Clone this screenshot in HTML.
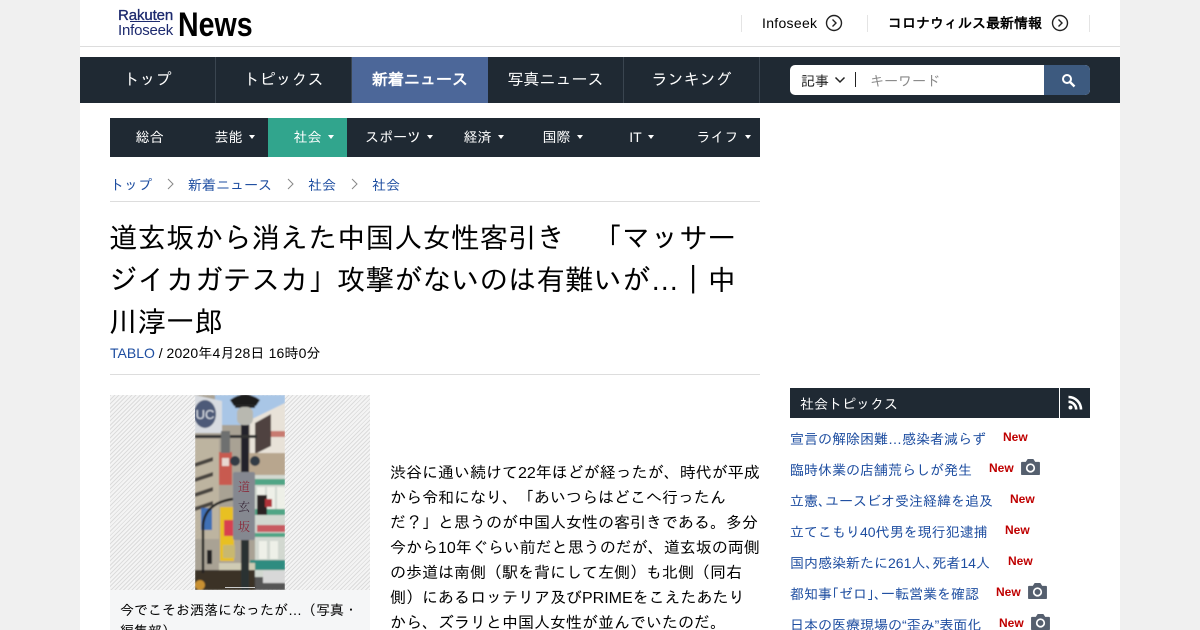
<!DOCTYPE html>
<html lang="ja"><head><meta charset="utf-8"><title>News</title>
<style>
*{box-sizing:border-box}
html,body{margin:0;padding:0;width:1200px;height:630px;overflow:hidden;background:#f0f0f0}
body{font-family:"Liberation Sans","IPAGothic",sans-serif;color:#000;text-spacing-trim:space-all}
#r{position:relative;width:1200px;height:630px;overflow:hidden}
.a{position:absolute;white-space:nowrap}
#w{position:absolute;left:80px;top:0;width:1040px;height:630px;background:#fff}
.nav{position:absolute;top:57px;height:46px;line-height:48px;color:#fff;font-size:16px;text-align:center;border-right:1px solid #3a4550}
.sub{position:absolute;top:118px;height:39px;line-height:39px;color:#fff;font-size:14px;text-align:center}
.sub i{display:inline-block;width:0;height:0;border:3px solid transparent;border-top:4px solid #fff;border-bottom:0;margin-left:6px;vertical-align:3px}
.l{color:#1d4da0}
.s{position:absolute;left:790px;font-size:14px;line-height:20px;color:#1d4da0;white-space:nowrap}
.n{position:absolute;font-size:12px;line-height:16px;font-weight:bold;color:#bf0000}
.b{position:absolute;left:390px;font-size:16px;line-height:25px;white-space:nowrap}
</style></head><body><div id="r">
<div id="w"></div>
<div class="a" style="left:118px;top:8px;font-size:15px;line-height:15px;color:#1d2a6e;letter-spacing:-.1px;-webkit-text-stroke:.3px #1d2a6e">Rakuten</div>
<div style="position:absolute;left:130px;top:21px;width:30px;height:1px;background:#1d2a6e"></div>
<div class="a" style="left:118px;top:23px;font-size:15px;line-height:15px;color:#1d2a6e;letter-spacing:-.2px">Infoseek</div>
<div class="a" style="left:178px;top:7px;font-size:34px;line-height:36px;font-weight:bold;transform:scaleX(.84);transform-origin:0 0">News</div>
<div style="position:absolute;left:80px;top:46px;width:1040px;height:1px;background:#ddd"></div>
<div style="position:absolute;left:741px;top:15px;width:1px;height:17px;background:#e4e4e4"></div>
<div class="a" style="left:762px;top:14px;font-size:14px;line-height:18px;letter-spacing:.3px">Infoseek</div>
<svg style="position:absolute;left:825px;top:14px" width="18" height="18" viewBox="0 0 18 18" fill="none" stroke="#222" stroke-width="1.4"><circle cx="9" cy="9" r="7.5"/><path d="M7.5 5.5L11 9 7.5 12.5"/></svg>
<div style="position:absolute;left:867px;top:15px;width:1px;height:17px;background:#e4e4e4"></div>
<div class="a" style="left:888px;top:14px;font-size:14px;line-height:18px;font-weight:bold">コロナウィルス最新情報</div>
<svg style="position:absolute;left:1051px;top:14px" width="18" height="18" viewBox="0 0 18 18" fill="none" stroke="#222" stroke-width="1.4"><circle cx="9" cy="9" r="7.5"/><path d="M7.5 5.5L11 9 7.5 12.5"/></svg>
<div style="position:absolute;left:1089px;top:15px;width:1px;height:17px;background:#e4e4e4"></div>

<div style="position:absolute;left:80px;top:57px;width:1040px;height:46px;background:#1f2933"></div>
<div class="nav" style="left:80px;width:136px">トップ</div>
<div class="nav" style="left:216px;width:136px">トピックス</div>
<div class="nav" style="left:352px;width:136px;background:#4c6799;font-weight:bold;border:0">新着ニュース</div>
<div class="nav" style="left:488px;width:136px">写真ニュース</div>
<div class="nav" style="left:624px;width:136px">ランキング</div>
<div style="position:absolute;left:790px;top:65px;width:300px;height:30px;background:#fff;border-radius:5px"></div>
<div style="position:absolute;left:1044px;top:65px;width:46px;height:30px;background:#3d5a7f;border-radius:0 5px 5px 0"></div>
<div class="a" style="left:801px;top:72px;font-size:14px;line-height:18px;color:#222">記事</div>
<svg style="position:absolute;left:834px;top:76px" width="12" height="8" viewBox="0 0 12 8" fill="none" stroke="#222" stroke-width="1.5"><path d="M1.5 1.5L6 6l4.5-4.5"/></svg>
<div style="position:absolute;left:855px;top:72px;width:1px;height:15px;background:#222"></div>
<div class="a" style="left:870px;top:72px;font-size:14px;line-height:18px;color:#8a8a8a">キーワード</div>
<svg style="position:absolute;left:1061px;top:73px" width="15" height="15" viewBox="0 0 15 15" fill="none" stroke="#fff"><circle cx="6" cy="6" r="4" stroke-width="2"/><path d="M9 9l4.5 4.5" stroke-width="2.4"/></svg>

<div style="position:absolute;left:110px;top:118px;width:650px;height:39px;background:#1f2933"></div>
<div class="sub" style="left:110px;width:79px">総合</div>
<div class="sub" style="left:189px;width:79px;padding-left:12px">芸能<i></i></div>
<div class="sub" style="left:268px;width:79px;background:#31a58d;padding-left:12px">社会<i></i></div>
<div class="sub" style="left:347px;width:104px">スポーツ<i></i></div>
<div class="sub" style="left:445px;width:79px;padding-right:2px">経済<i></i></div>
<div class="sub" style="left:524px;width:79px;padding-right:2px">国際<i></i></div>
<div class="sub" style="left:603px;width:79px;padding-right:2px">IT<i></i></div>
<div class="sub" style="left:682px;width:79px;padding-left:4px">ライフ<i></i></div>

<div class="a l" style="left:110px;top:176px;font-size:14px;line-height:18px">トップ</div>
<div class="a l" style="left:188px;top:176px;font-size:14px;line-height:18px">新着ニュース</div>
<div class="a l" style="left:308px;top:176px;font-size:14px;line-height:18px">社会</div>
<div class="a l" style="left:372px;top:176px;font-size:14px;line-height:18px">社会</div>
<svg style="position:absolute;left:166px;top:178px" width="250" height="12" fill="none" stroke="#888" stroke-width="1"><path d="M2 1l5 5-5 5M122 1l5 5-5 5M186 1l5 5-5 5"/></svg>
<div style="position:absolute;left:110px;top:201px;width:650px;height:1px;background:#ddd"></div>

<div class="a" style="left:109px;top:218px;font-size:28.5px;line-height:42px;white-space:nowrap;width:650px">道玄坂から消えた中国人女性客引き　「マッサー<br>ジイカガテスカ」攻撃がないのは有難いが…｜中<br>川淳一郎</div>
<div class="a" style="left:110px;top:344px;font-size:14px;line-height:18px"><span class="l">TABLO</span> / <span style="letter-spacing:.15px">2020年4月28日 16時0分</span></div>
<div style="position:absolute;left:110px;top:374px;width:650px;height:1px;background:#ddd"></div>

<div style="position:absolute;left:110px;top:395px;width:260px;height:195px;background:repeating-linear-gradient(135deg,#dcdcdc 0,#dcdcdc 1px,#f4f4f4 1px,#f4f4f4 3px)"></div>
<svg style="position:absolute;left:195px;top:395px" width="90" height="195" viewBox="0 0 90 195">
<defs><filter id="bl" x="0" y="0" width="100%" height="100%"><feGaussianBlur stdDeviation=".7"/></filter></defs>
<g filter="url(#bl)">
<rect width="90" height="195" fill="#a9a294"/>
<rect x="20" width="70" height="30" fill="#a9c6e6"/>
<path d="M0 0l27 6v32H0z" fill="#d8dbe0"/>
<ellipse cx="10" cy="19" rx="11" ry="14" fill="#4d5a78"/>
<text x="10" y="24" font-size="13" text-anchor="middle" fill="#dfe3ea" font-family="'Liberation Sans',sans-serif">UC</text>
<path d="M55 25L90 8v50H55z" fill="#e8e2d8"/>
<path d="M60 28L76 19v32l-16 8z" fill="#4f4240"/>
<rect x="76" y="36" width="14" height="6" fill="#c87a70"/>
<rect x="50" y="58" width="40" height="22" fill="#b8a68e"/>
<rect x="0" y="44" width="24" height="100" fill="#bdb4a0"/>
<path d="M0 68l18-6v4L0 72zM0 83l18-6v4L0 87zM0 98l18-6v4l-18 6zM0 112l18-6v4l-18 6z" fill="#4a4440"/>
<rect x="24" y="57" width="13" height="33" fill="#c85a50"/>
<rect x="27" y="63" width="7" height="8" fill="#e8d8d0"/>
<rect x="60" y="80" width="30" height="110" fill="#d2d8d0"/>
<rect x="58" y="84" width="32" height="6" fill="#4fa585"/>
<rect x="62" y="92" width="8" height="22" fill="#eef0e8"/><rect x="72" y="92" width="8" height="22" fill="#eef0e8"/><rect x="82" y="92" width="8" height="22" fill="#eef0e8"/>
<rect x="58" y="114" width="32" height="6" fill="#4fa585"/><rect x="62" y="130" width="28" height="7" fill="#c85a60"/><rect x="58" y="138" width="32" height="4" fill="#4fa585"/>
<rect x="64" y="146" width="8" height="18" fill="#eef0e8"/><rect x="75" y="146" width="8" height="18" fill="#eef0e8"/>
<rect x="55" y="165" width="35" height="10" fill="#2f8c80"/>
<rect x="25" y="112" width="14" height="54" fill="#e8c020"/>
<rect x="29" y="125" width="9" height="16" fill="#d84050"/>
<rect x="28" y="150" width="12" height="13" fill="#c8b870"/>
<rect x="24" y="168" width="36" height="14" fill="#cfcbb4"/>
<rect x="0" y="175" width="60" height="20" fill="#3a3028"/>
<rect x="60" y="182" width="30" height="13" fill="#555"/>
<rect x="68" y="176" width="22" height="12" fill="#d8d8d8"/>
<circle cx="5" cy="190" r="5" fill="#c89030"/>
<rect x="6" y="113" width="11" height="22" fill="#3f6fb5"/>
<rect x="12" y="155" width="5" height="14" fill="#222"/>
<path d="M8 178V130q2-22 30-26" fill="none" stroke="#222" stroke-width="2.4"/>
<rect x="46" y="140" width="8" height="55" fill="#2c3030"/>
<rect x="46" y="28" width="8" height="50" fill="#22242a"/>
<rect x="0" y="40" width="62" height="3" fill="#333"/>
<rect x="26" y="36" width="9" height="22" fill="#6e7070"/>
<circle cx="40" cy="66" r="5" fill="#333a44"/><circle cx="60" cy="66" r="5" fill="#333a44"/>
<path d="M35 5q15-11 30 0l-4 6H39z" fill="#1c1c1c"/>
<rect x="40" y="9" width="20" height="4" fill="#222"/>
<rect x="42" y="12" width="16" height="18" rx="6" fill="#b8b8b0"/>
<rect x="38" y="77" width="22" height="68" rx="2" fill="#858890"/>
<rect x="62" y="100" width="10" height="20" fill="#2a2424"/><rect x="70" y="104" width="7" height="8" fill="#b03038"/>
</g>
<rect x="30" y="192" width="30" height="1" fill="#ccc"/>
<text x="49" y="96" font-size="12" text-anchor="middle" fill="#8a2a3a" font-family="'Noto Serif CJK SC',serif">道</text>
<text x="49" y="116" font-size="12" text-anchor="middle" fill="#3a2a3a" font-family="'Noto Serif CJK SC',serif">玄</text>
<text x="49" y="136" font-size="12" text-anchor="middle" fill="#8a2a3a" font-family="'Noto Serif CJK SC',serif">坂</text>
</svg>
<div style="position:absolute;left:110px;top:590px;width:260px;height:40px;background:#f5f6f7"></div>
<div class="a" style="left:120px;top:600px;width:245px;font-size:14px;line-height:21px;white-space:normal">今でこそお洒落になったが…（写真・<br>編集部）</div>

<div class="b" style="top:461px">渋谷に通い続けて22年ほどが経ったが、時代が平成</div>
<div class="b" style="top:486px">から令和になり、「あいつらはどこへ行ったん</div>
<div class="b" style="top:511px">だ？」と思うのが中国人女性の客引きである。多分</div>
<div class="b" style="top:536px">今から10年ぐらい前だと思うのだが、道玄坂の両側</div>
<div class="b" style="top:561px">の歩道は南側（駅を背にして左側）も北側（同右</div>
<div class="b" style="top:586px">側）にあるロッテリア及びPRIMEをこえたあたり</div>
<div class="b" style="top:611px">から、ズラリと中国人女性が並んでいたのだ。</div>

<div style="position:absolute;left:790px;top:388px;width:269px;height:30px;background:#1f2933"></div>
<div class="a" style="left:800px;top:395px;font-size:14px;line-height:18px;color:#fff">社会トピックス</div>
<div style="position:absolute;left:1060px;top:388px;width:30px;height:30px;background:#1f2933"></div>
<svg style="position:absolute;left:1067px;top:395px" width="16" height="16" viewBox="0 0 16 16" fill="none" stroke="#fff" stroke-width="2.6"><circle cx="3.5" cy="12.5" r="2" fill="#fff" stroke="none"/><path d="M1.5 6.8a7.7 7.7 0 0 1 7.7 7.7M1.5 2a12.5 12.5 0 0 1 12.5 12.5"/></svg>

<div class="s" style="top:429px">宣言の解除困難…感染者減らず</div><div class="n" style="left:1003px;top:429px">New</div>
<div class="s" style="top:460px">臨時休業の店舗荒らしが発生</div><div class="n" style="left:989px;top:460px">New</div>
<div class="s" style="top:491px">立憲､ユースビオ受注経緯を追及</div><div class="n" style="left:1010px;top:491px">New</div>
<div class="s" style="top:522px">立てこもり40代男を現行犯逮捕</div><div class="n" style="left:1005px;top:522px">New</div>
<div class="s" style="top:553px">国内感染新たに261人､死者14人</div><div class="n" style="left:1008px;top:553px">New</div>
<div class="s" style="top:584px">都知事｢ゼロ｣､一転営業を確認</div><div class="n" style="left:996px;top:584px">New</div>
<div class="s" style="top:615px">日本の医療現場の“歪み”表面化</div><div class="n" style="left:999px;top:615px">New</div>
<svg style="position:absolute;left:1021px;top:459px" width="19" height="17" viewBox="0 0 20 18"><path d="M1 3h4l2-3h6l2 3h4a1 1 0 0 1 1 1v12a1 1 0 0 1-1 1H1a1 1 0 0 1-1-1V4a1 1 0 0 1 1-1z" fill="#555f6e"/><circle cx="10" cy="9.5" r="4" fill="none" stroke="#fff" stroke-width="1.8"/></svg>
<svg style="position:absolute;left:1028px;top:583px" width="19" height="17" viewBox="0 0 20 18"><path d="M1 3h4l2-3h6l2 3h4a1 1 0 0 1 1 1v12a1 1 0 0 1-1 1H1a1 1 0 0 1-1-1V4a1 1 0 0 1 1-1z" fill="#555f6e"/><circle cx="10" cy="9.5" r="4" fill="none" stroke="#fff" stroke-width="1.8"/></svg>
<svg style="position:absolute;left:1031px;top:614px" width="19" height="17" viewBox="0 0 20 18"><path d="M1 3h4l2-3h6l2 3h4a1 1 0 0 1 1 1v12a1 1 0 0 1-1 1H1a1 1 0 0 1-1-1V4a1 1 0 0 1 1-1z" fill="#555f6e"/><circle cx="10" cy="9.5" r="4" fill="none" stroke="#fff" stroke-width="1.8"/></svg>
</div></body></html>
